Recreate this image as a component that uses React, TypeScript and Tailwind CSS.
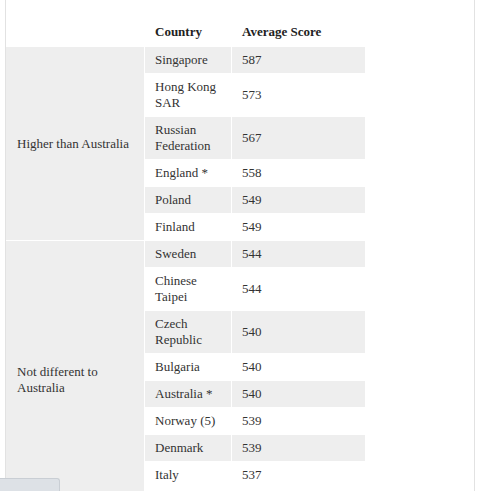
import React from "react";

type Row = { lines: string[]; score: number };

const groups: { label: string[]; rows: Row[]; extra?: boolean }[] = [
  {
    label: ["Higher than Australia"],
    rows: [
      { lines: ["Singapore"], score: 587 },
      { lines: ["Hong Kong", "SAR"], score: 573 },
      { lines: ["Russian", "Federation"], score: 567 },
      { lines: ["England *"], score: 558 },
      { lines: ["Poland"], score: 549 },
      { lines: ["Finland"], score: 549 },
    ],
  },
  {
    label: ["Not different to", "Australia"],
    extra: true,
    rows: [
      { lines: ["Sweden"], score: 544 },
      { lines: ["Chinese", "Taipei"], score: 544 },
      { lines: ["Czech", "Republic"], score: 540 },
      { lines: ["Bulgaria"], score: 540 },
      { lines: ["Australia *"], score: 540 },
      { lines: ["Norway (5)"], score: 539 },
      { lines: ["Denmark"], score: 539 },
      { lines: ["Italy"], score: 537 },
    ],
  },
];

export default function App() {
  let stripe = 0;
  let rowStart = 2;

  return (
    <div
      className="h-screen overflow-hidden bg-white text-[13px] leading-[16px] text-[#333]"
      style={{ fontFamily: "'Liberation Serif', 'Times New Roman', serif" }}
    >
      <div className="ml-[5px] w-[470px] min-h-full border-x border-[#e2e2e2] pt-[14px]">
        <div className="grid w-[359px] grid-cols-[138px_86px_133px] gap-px">
          {/* Header */}
          <div />
          <div className="px-[10px] pt-[10px] pb-[6px] font-bold text-[#222]">
            Country
          </div>
          <div className="px-[10px] pt-[10px] pb-[6px] font-bold text-[#222]">
            Average Score
          </div>

          {groups.map((g, gi) => {
            const start = rowStart;
            const span = g.rows.length + (g.extra ? 1 : 0);
            rowStart += span;
            return (
              <React.Fragment key={gi}>
                <div
                  className="col-start-1 flex items-center bg-[#eeeeee] px-[11px]"
                  style={{ gridRow: `${start} / span ${span}` }}
                >
                  <span>
                    {g.label.map((l, i) => (
                      <span key={i} className="block">
                        {l}
                      </span>
                    ))}
                  </span>
                </div>
                {g.rows.map((r) => {
                  const bg = stripe++ % 2 === 0 ? "bg-[#eeeeee]" : "bg-white";
                  return (
                    <React.Fragment key={r.lines.join(" ")}>
                      <div className={`col-start-2 px-[10px] py-[5px] ${bg}`}>
                        {r.lines.map((l, i) => (
                          <span key={i} className="block">
                            {l}
                          </span>
                        ))}
                      </div>
                      <div
                        className={`col-start-3 flex items-center px-[10px] py-[5px] ${bg}`}
                      >
                        {r.score}
                      </div>
                    </React.Fragment>
                  );
                })}
                {/* table continues below the fold */}
                {g.extra && (
                  <>
                    <div className="col-start-2 mt-[2px] h-[27px] bg-white" />
                    <div className="col-start-3 mt-[2px] h-[27px] bg-white" />
                  </>
                )}
              </React.Fragment>
            );
          })}
        </div>
      </div>

      {/* Floating tab at bottom-left */}
      <div className="fixed bottom-0 left-0 h-[13px] w-[60px] rounded-tr-[3px] border-t border-r border-[#c9ced4] bg-[#dde1e6]" />
    </div>
  );
}
